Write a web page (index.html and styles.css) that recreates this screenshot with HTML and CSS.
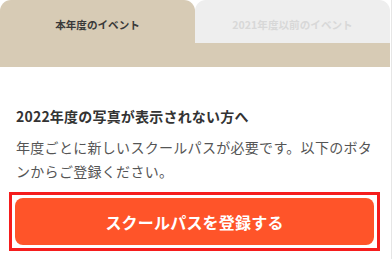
FILE: index.html
```html
<!DOCTYPE html>
<html lang="ja">
<head>
<meta charset="utf-8">
<link rel="stylesheet" href="styles.css">
</head>
<body>
<div class="page">
  <nav class="tabs">
    <div class="tab tab-active">本年度のイベント</div>
    <div class="tab tab-inactive">2021年度以前のイベント</div>
  </nav>
  <div class="tab-strip"></div>
  <section class="content">
    <h2 class="title">2022年度の写真が表示されない方へ</h2>
    <p class="desc">年度ごとに新しいスクールパスが必要です。以下のボタンからご登録ください。</p>
    <div class="highlight">
      <button class="register">スクールパスを登録する</button>
    </div>
  </section>
</div>
</body>
</html>
```

FILE: styles.css
```css
html, body {
  margin: 0;
  padding: 0;
  background: #fff;
}
body {
  width: 391px;
  border-right: 1px solid #e6e6e6;
  font-family: "Noto Sans CJK JP", "Noto Sans", sans-serif;
}
.page {
  width: 390px;
  height: 259px;
  overflow: hidden;
}
.tabs {
  display: flex;
  height: 43px;
}
.tab {
  flex: 1 1 0;
  display: flex;
  align-items: center;
  justify-content: center;
  padding-top: 6px;
  box-sizing: border-box;
  font-size: 10.6px;
  font-weight: 700;
  border-radius: 11px 11px 0 0;
}
.tab-active {
  background: #d7cbb5;
  color: #3a3a3a;
}
.tab-inactive {
  background: #eeeeee;
  color: #d8d8d8;
}
.tab-strip {
  height: 24px;
  background: #d7cbb5;
}
.content {
  padding: 39px 14px 0 16px;
}
.title {
  margin: 0;
  font-size: 14px;
  line-height: 20px;
  font-weight: 700;
  color: #333;
  letter-spacing: 0.2px;
}
.desc {
  margin: 9px 0 0;
  font-size: 14px;
  line-height: 24px;
  color: #555;
  letter-spacing: 0.3px;
}
.highlight {
  margin: 9px -4px 0 -7px;
  border: 3px solid #f51d1d;
  padding: 3px;
}
.register {
  display: block;
  width: 100%;
  height: 47px;
  border: none;
  border-radius: 8px;
  background: #ff5429;
  color: #fff;
  font-family: "Noto Sans CJK JP", "Noto Sans", sans-serif;
  font-size: 16px;
  font-weight: 700;
  letter-spacing: 0.2px;
  padding: 0;
}
```
